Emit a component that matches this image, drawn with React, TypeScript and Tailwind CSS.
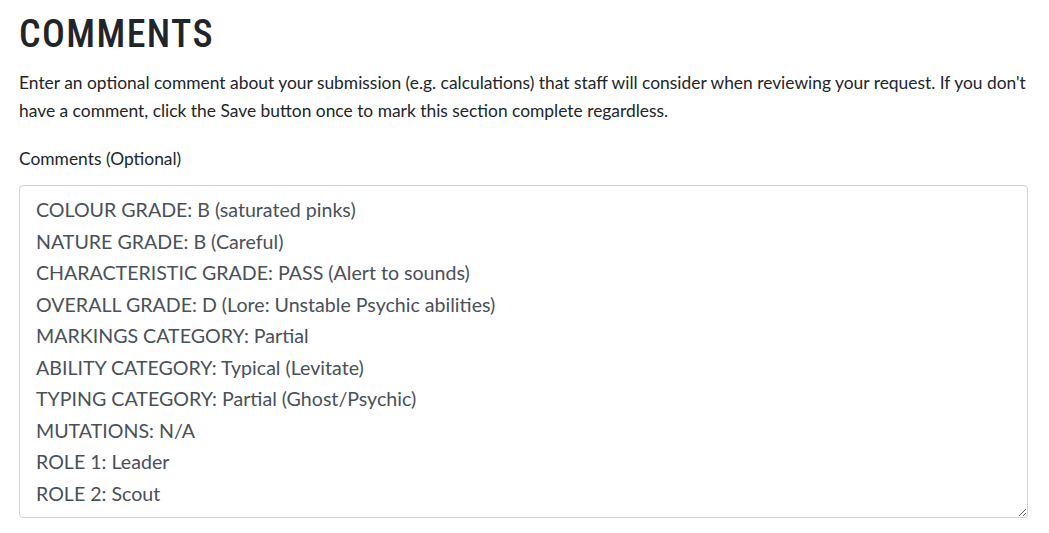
const lines = [
  'COLOUR GRADE: B (saturated pinks)',
  'NATURE GRADE: B (Careful)',
  'CHARACTERISTIC GRADE: PASS (Alert to sounds)',
  'OVERALL GRADE: D (Lore: Unstable Psychic abilities)',
  'MARKINGS CATEGORY: Partial',
  'ABILITY CATEGORY: Typical (Levitate)',
  'TYPING CATEGORY: Partial (Ghost/Psychic)',
  'MUTATIONS: N/A',
  'ROLE 1: Leader',
  'ROLE 2: Scout',
]

export default function App() {
  return (
    <div className="bg-white min-h-screen pl-[19px] pr-[21px] pt-[11px] font-['Lato','Liberation_Sans',sans-serif] text-[#212529]">
      <h2 className="font-['Roboto_Condensed','Roboto',sans-serif] font-stretch-condensed font-medium text-[38px] leading-[46px] tracking-[1.4px] text-[#212529] mb-[12px]">
        COMMENTS
      </h2>
      <p className="text-[17.4px] leading-[28px] mb-[22px]">
        Enter an optional comment about your submission (e.g. calculations) that staff will consider when reviewing your request. If you don't have a comment, click the Save button once to mark this section complete regardless.
      </p>
      <label className="block text-[17.4px] leading-[24px] mb-[14px]">Comments (Optional)</label>
      <textarea
        readOnly
        defaultValue={lines.join('\n')}
        className="block w-full h-[333px] border border-[#ced4da] rounded-[4px] px-[16px] py-[8px] text-[19.6px] leading-[31.5px] text-[#495057] outline-none font-['Lato','Liberation_Sans',sans-serif]"
      />
    </div>
  )
}
